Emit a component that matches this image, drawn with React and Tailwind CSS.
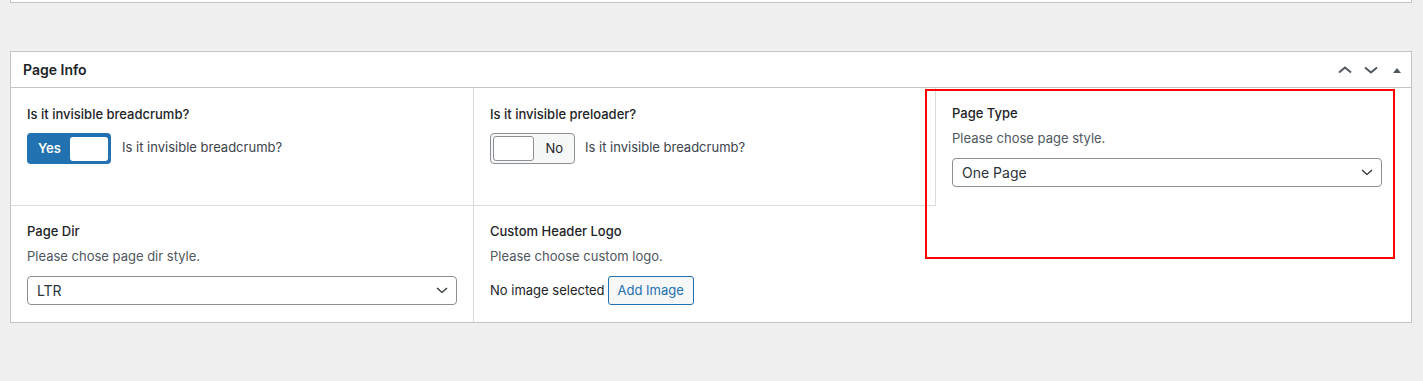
import React from 'react';

const FONT = { fontFamily: 'Inter, "Liberation Sans", sans-serif' };

function Chevron({ dir = 'down', className = '' }) {
  const d = dir === 'up' ? 'M1 6.5 L7 1.5 L13 6.5' : 'M1 1.5 L7 6.5 L13 1.5';
  return (
    <svg width="14" height="8" viewBox="0 0 14 8" className={className} fill="none">
      <path d={d} stroke="currentColor" strokeWidth="2" />
    </svg>
  );
}

function SelectBox({ value }) {
  return (
    <div className="h-[29px] w-[430px] rounded-[4px] border border-[#8c8f94] bg-white flex items-center justify-between pl-[9px] pr-[8px]">
      <span className="text-[14px] text-[#2c3338]">{value}</span>
      <svg width="12" height="7" viewBox="0 0 12 7" fill="none" className="text-[#2c3338]">
        <path d="M1 1 L6 5.5 L11 1" stroke="currentColor" strokeWidth="1.3" />
      </svg>
    </div>
  );
}

function Toggle({ on }) {
  if (on) {
    return (
      <div className="h-[31px] w-[84px] rounded-[4px] bg-[#2271b1] flex items-center pl-[11px] pr-[3px]">
        <span className="text-[13px] font-semibold text-white">Yes</span>
        <div className="ml-auto h-[24px] w-[38px] rounded-[3px] bg-white" />
      </div>
    );
  }
  return (
    <div className="h-[31px] w-[85px] rounded-[4px] border border-[#8c8f94] bg-[#f6f7f7] flex items-center pl-[2px] pr-[11px]">
      <div className="h-[25px] w-[41px] rounded-[3px] border border-[#8c8f94] bg-white" />
      <span className="ml-auto text-[13px] text-[#1d2327]">No</span>
    </div>
  );
}

function Label({ children }) {
  return <p className="text-[13px] font-medium text-[#1d2327] leading-[18px]">{children}</p>;
}

function Desc({ children }) {
  return <p className="mt-[7px] text-[13px] text-[#50575e] leading-[18px]">{children}</p>;
}

export default function App() {
  return (
    <div className="min-h-[381px] bg-[#f0f0f1] px-[10px]" style={FONT}>
      {/* previous box tail */}
      <div className="h-[3px] w-[1402px] border-x border-b border-[#c3c4c7] bg-white" />

      <div className="mt-[48px] w-[1402px] border border-[#c3c4c7] bg-white">
        {/* Header */}
        <div className="h-[36px] border-b border-[#c3c4c7] flex items-center pl-[12px] pr-[8px]">
          <h2 className="text-[14px] font-semibold text-[#1d2327]">Page Info</h2>
          <div className="ml-auto flex items-center text-[#50575e]">
            <Chevron dir="up" />
            <Chevron dir="down" className="ml-[12px]" />
            <svg width="10" height="6" viewBox="0 0 10 6" className="ml-[14px] mr-[1px]">
              <path d="M1 6 L5 1 L9 6 Z" fill="currentColor" />
            </svg>
          </div>
        </div>

        {/* Fields */}
        <div className="grid grid-cols-[463px_462px_1fr] grid-rows-[118px_116px]">
          <div className="border-r border-b border-[#dcdcde] pl-[16px] pt-[17px]">
            <Label>Is it invisible breadcrumb?</Label>
            <div className="mt-[10px] flex items-center gap-[11px]">
              <Toggle on />
              <span className="text-[13px] text-[#3c434a] -mt-[1px]">Is it invisible breadcrumb?</span>
            </div>
          </div>

          <div className="border-r border-b border-[#dcdcde] pl-[16px] pt-[17px]">
            <Label>Is it invisible preloader?</Label>
            <div className="mt-[10px] flex items-center gap-[10px]">
              <Toggle />
              <span className="text-[13px] text-[#3c434a] -mt-[1px]">Is it invisible breadcrumb?</span>
            </div>
          </div>

          <div className="row-span-2 relative pl-[16px] pt-[16px]">
            <Label>Page Type</Label>
            <Desc>Please chose page style.</Desc>
            <div className="mt-[11px]">
              <SelectBox value="One Page" />
            </div>
            {/* annotation highlight */}
            <div className="absolute left-[-11px] top-[1px] h-[170px] w-[470px] border-2 border-[#ff0000] pointer-events-none" />
          </div>

          <div className="border-r border-[#dcdcde] pl-[16px] pt-[16px]">
            <Label>Page Dir</Label>
            <Desc>Please chose page dir style.</Desc>
            <div className="mt-[11px]">
              <SelectBox value="LTR" />
            </div>
          </div>

          <div className="pl-[16px] pt-[16px]">
            <Label>Custom Header Logo</Label>
            <Desc>Please choose custom logo.</Desc>
            <div className="mt-[11px] flex items-center gap-[3px]">
              <span className="text-[13px] text-[#1d2327]">No image selected</span>
              <button className="h-[29px] px-[9px] rounded-[3px] border border-[#2271b1] bg-[#f6f7f7] text-[13px] text-[#2271b1]">
                Add Image
              </button>
            </div>
          </div>
        </div>
      </div>
    </div>
  );
}
